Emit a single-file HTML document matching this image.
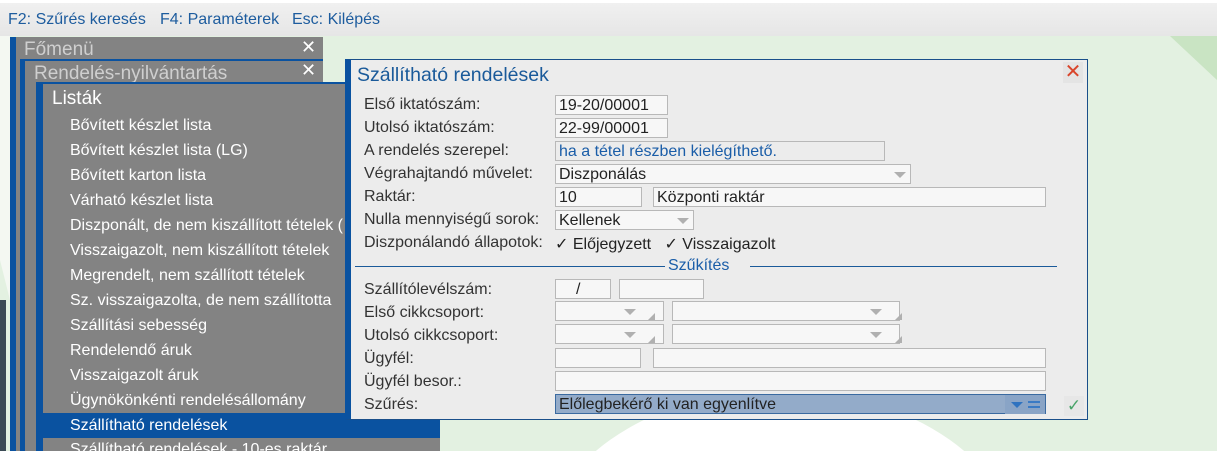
<!DOCTYPE html>
<html><head><meta charset="utf-8"><style>
*{margin:0;padding:0;box-sizing:border-box}
html,body{width:1217px;height:451px;overflow:hidden}
body{position:relative;background:#e3f1e1;font-family:"Liberation Sans",Arial,sans-serif}
.a{position:absolute}
.top{left:0;top:0;width:1217px;height:36px;background:linear-gradient(#f0f0f0,#e6e6e6);border-top:3px solid #fff}
.top span{position:absolute;top:8px;font-size:16px;color:#1d5c9e}
.lbl{position:absolute;left:364px;font-size:16px;color:#333}
.in{position:absolute;height:20px;background:#f7f7f7;border:1px solid #b8b8b8;font-size:16px;color:#222;padding-left:3px;line-height:19px;white-space:nowrap;overflow:hidden}
.it{position:absolute;left:70px;font-size:16px;color:#fff;white-space:nowrap}
.dd{position:absolute;width:0;height:0;border-left:6px solid transparent;border-right:6px solid transparent;border-top:6px solid #b0b0b0}
.rs{position:absolute;width:0;height:0;border-left:7px solid transparent;border-bottom:7px solid #b0b0b0}
</style></head><body>
<svg class="a" style="left:0;top:0" width="1217" height="451"><polygon points="1170,36 1217,36 1217,80" fill="#c9e4c3"/><ellipse cx="780" cy="560" rx="240" ry="170" fill="#fff"/><polygon points="0,36 10,36 10,300 0,260" fill="#f4f8f2"/></svg>
<div class="a top"><span style="left:8px">F2: Szűrés keresés</span><span style="left:160px">F4: Paraméterek</span><span style="left:292px">Esc: Kilépés</span></div>
<div class="a" style="left:0;top:300px;width:6px;height:151px;background:#3b4a55"></div>
<div class="a" style="left:10px;top:37px;width:313px;height:414px;background:#0a52a0"></div>
<div class="a" style="left:16px;top:37px;width:307px;height:414px;background:#838383"></div>
<div class="a" style="left:24px;top:39px;font-size:19px;color:#cfcfcf">Főmenü</div>
<div class="a" style="left:301px;top:37px;font-size:18px;color:#fff">✕</div>
<div class="a" style="left:20px;top:59px;width:303px;height:392px;background:#0a52a0"></div>
<div class="a" style="left:25px;top:61px;width:298px;height:390px;background:#838383"></div>
<div class="a" style="left:34px;top:63px;font-size:19px;color:#cfcfcf">Rendelés-nyilvántartás</div>
<div class="a" style="left:301px;top:60px;font-size:18px;color:#fff">✕</div>
<div class="a" style="left:36px;top:82px;width:404px;height:369px;background:#0a52a0"></div>
<div class="a" style="left:43px;top:84px;width:397px;height:329px;background:#838383"></div>
<div class="a" style="left:43px;top:438px;width:397px;height:13px;background:#838383"></div>
<div class="a" style="left:52px;top:88px;font-size:19px;color:#fff">Listák</div>
<div class="it" style="top:117px">Bővített készlet lista</div>
<div class="it" style="top:142px">Bővített készlet lista (LG)</div>
<div class="it" style="top:167px">Bővített karton lista</div>
<div class="it" style="top:192px">Várható készlet lista</div>
<div class="it" style="top:217px">Diszponált, de nem kiszállított tételek (</div>
<div class="it" style="top:242px">Visszaigazolt, nem kiszállított tételek</div>
<div class="it" style="top:267px">Megrendelt, nem szállított tételek</div>
<div class="it" style="top:292px">Sz. visszaigazolta, de nem szállította</div>
<div class="it" style="top:317px">Szállítási sebesség</div>
<div class="it" style="top:342px">Rendelendő áruk</div>
<div class="it" style="top:367px">Visszaigazolt áruk</div>
<div class="it" style="top:392px">Ügynökönkénti rendelésállomány</div>
<div class="it" style="top:417px">Szállítható rendelések</div>
<div class="it" style="top:441px">Szállítható rendelések - 10-es raktár</div>
<div class="a" style="left:345px;top:59px;width:743px;height:361px;background:#ececec;border:1px solid #1a4f8a;border-left:6px solid #0a52a0"></div>
<div class="a" style="left:357px;top:64px;font-size:19.5px;color:#1a5a9a">Szállítható rendelések</div>
<div class="a" style="left:1063px;top:62px;width:20px;height:21px;background:#e4e4e4;color:#d9452b;font-size:20px;line-height:21px;text-align:center">✕</div>
<div class="lbl" style="top:96px">Első iktatószám:</div>
<div class="lbl" style="top:119px">Utolsó iktatószám:</div>
<div class="lbl" style="top:142px">A rendelés szerepel:</div>
<div class="lbl" style="top:165px">Végrahajtandó művelet:</div>
<div class="lbl" style="top:188px">Raktár:</div>
<div class="lbl" style="top:211px">Nulla mennyiségű sorok:</div>
<div class="lbl" style="top:234px">Diszponálandó állapotok:</div>
<div class="in" style="left:555px;top:95px;width:113px">19-20/00001</div>
<div class="in" style="left:555px;top:118px;width:113px">22-99/00001</div>
<div class="in" style="left:555px;top:141px;width:330px;background:#ececec;color:#1a5da8">ha a tétel részben kielégíthető.</div>
<div class="in" style="left:555px;top:164px;width:356px">Diszponálás</div><div class="dd" style="left:894px;top:172px"></div>
<div class="in" style="left:555px;top:187px;width:87px">10</div>
<div class="in" style="left:653px;top:187px;width:393px">Központi raktár</div>
<div class="in" style="left:555px;top:210px;width:139px">Kellenek</div><div class="dd" style="left:677px;top:218px"></div>
<div class="a" style="left:555px;top:234px;font-size:16px;color:#222">✓ Előjegyzett &nbsp;&nbsp;✓ Visszaigazolt</div>
<div class="a" style="left:355px;top:266px;width:310px;height:1px;background:#1a5a9a"></div>
<div class="a" style="left:750px;top:266px;width:307px;height:1px;background:#1a5a9a"></div>
<div class="a" style="left:668px;top:257px;font-size:16px;color:#1a5da8">Szűkítés</div>
<div class="lbl" style="top:281px">Szállítólevélszám:</div>
<div class="lbl" style="top:304px">Első cikkcsoport:</div>
<div class="lbl" style="top:327px">Utolsó cikkcsoport:</div>
<div class="lbl" style="top:350px">Ügyfél:</div>
<div class="lbl" style="top:373px">Ügyfél besor.:</div>
<div class="lbl" style="top:396px">Szűrés:</div>
<div class="in" style="left:555px;top:279px;width:56px;padding-left:20px">/</div>
<div class="in" style="left:619px;top:279px;width:85px"></div>
<div class="in" style="left:555px;top:301px;width:109px"></div><div class="dd" style="left:624px;top:309px"></div><div class="rs" style="left:648px;top:313px"></div>
<div class="in" style="left:672px;top:301px;width:228px"></div><div class="dd" style="left:870px;top:309px"></div><div class="rs" style="left:895px;top:313px"></div>
<div class="in" style="left:555px;top:324px;width:109px"></div><div class="dd" style="left:624px;top:332px"></div><div class="rs" style="left:648px;top:336px"></div>
<div class="in" style="left:672px;top:324px;width:228px"></div><div class="dd" style="left:870px;top:332px"></div><div class="rs" style="left:895px;top:336px"></div>
<div class="in" style="left:555px;top:348px;width:86px"></div>
<div class="in" style="left:653px;top:348px;width:393px"></div>
<div class="in" style="left:555px;top:371px;width:491px"></div>
<div class="in" style="left:555px;top:394px;width:491px;background:#93abc9;border-color:#3a6aa0">Előlegbekérő ki van egyenlítve</div>
<div class="a" style="left:1005px;top:395px;width:40px;height:19px;background:#89a4c6"></div>
<div class="dd" style="left:1011px;top:402px;border-top-color:#2f73c0"></div>
<div class="a" style="left:1028px;top:401px;width:12px;height:2px;background:#3a7ac4"></div>
<div class="a" style="left:1028px;top:406px;width:12px;height:2px;background:#3a7ac4"></div>
<div class="a" style="left:1064px;top:396px;width:20px;height:20px;background:#e7e7e7;color:#4aa46a;font-size:17px;text-align:center;line-height:20px">✓</div>
</body></html>
